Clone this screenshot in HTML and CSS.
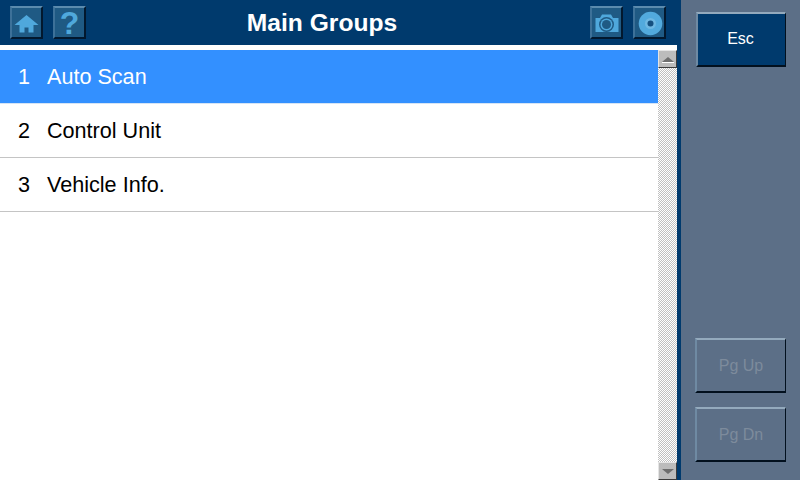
FILE: index.html
```html
<!DOCTYPE html>
<html lang="en">
<head>
    <meta charset="UTF-8" />
    <title>Main Groups</title>
    <link rel="stylesheet" href="styles.css">
</head>
<body>
<div class="screen">
    <div class="main">
        <div class="header">
            <div class="tool-btn">
                <svg width="28" height="24" viewBox="0 0 28 24"><path d="M13.500 4 L25.500 14 H20.500 V21.500 H15.500 V16.500 H11.500 V21.500 H6.500 V14 H1.500 Z" fill="#4fa8dc"/></svg>
            </div>
            <div class="tool-btn">
                <span class="help">?</span>
            </div>
            <h1>Main Groups</h1>
            <div class="tool-btn">
                <svg width="28" height="24" viewBox="0 0 28 24"><path d="M2.500 7 H7 L9 3.500 H18 L20 7 H25.500 V21 H2.500 Z" fill="#4fa8dc"/><circle cx="13.500" cy="13.500" r="7.500" fill="#1f5a84"/><circle cx="13.500" cy="13.500" r="6" fill="#4fa8dc"/><circle cx="13.500" cy="13.500" r="4.500" fill="#1f5a84"/></svg>
            </div>
            <div class="tool-btn">
                <svg width="28" height="28" viewBox="0 0 28 28"><circle cx="14.500" cy="14.500" r="11.800" fill="#52aadd"/><circle cx="14.500" cy="14.500" r="5.500" fill="#6fb8e2"/><circle cx="14.500" cy="14.500" r="3" fill="#15507f"/></svg>
            </div>
        </div>
        <div class="content">
            <ul class="list">
                <li class="row selected"><span class="num">1</span>Auto Scan</li>
                <li class="row"><span class="num">2</span>Control Unit</li>
                <li class="row"><span class="num">3</span>Vehicle Info.</li>
            </ul>
            <div class="scrollbar">
                <div class="arrow"><span class="tri-up"></span></div>
                <div class="track"></div>
                <div class="arrow"><span class="tri-down"></span></div>
            </div>
        </div>
    </div>
    <div class="side">
        <div class="side-btn primary">Esc</div>
        <div class="side-bottom">
            <div class="side-btn disabled">Pg Up</div>
            <div class="side-btn disabled">Pg Dn</div>
        </div>
    </div>
</div>
</body>
</html>
```
FILE: styles.css
```css
* {
    box-sizing: border-box;
    margin: 0;
    padding: 0;
}
body {
    width: 800px;
    height: 480px;
    overflow: hidden;
    font-family: 'Liberation Sans', Arial, sans-serif;
}
.screen {
    display: flex;
    width: 800px;
    height: 480px;
    background: #5c6f87;
}
.main {
    width: 681px;
    height: 480px;
    display: flex;
    flex-direction: column;
    background: #003a6d;
    padding-right: 4px;
}
.header {
    display: flex;
    align-items: flex-start;
    gap: 10px;
    height: 45px;
    margin-right: -4px;
    padding: 6px 15px 0 10px;
    background: #003a6d;
}
.header h1 {
    flex: 1;
    padding-right: 32px;
    color: #fff;
    font-size: 24.600px;
    line-height: 33px;
    text-align: center;
    font-weight: bold;
}
.tool-btn {
    width: 33px;
    height: 33px;
    display: flex;
    align-items: center;
    justify-content: center;
    background: #1f5a84;
    border-style: solid;
    border-width: 2px;
    border-color: #5b8bae #02182e #02182e #3d7199;
}
.help {
    color: #4fa8dc;
    font-size: 32px;
    font-weight: bold;
    line-height: 28px;
}
.content {
    flex: 1;
    display: flex;
    min-height: 0;
    background: #fff;
    border-top: 5px solid #fff;
}
.list {
    flex: 1;
    list-style: none;
}
.row {
    display: flex;
    align-items: center;
    height: 54px;
    padding-left: 18px;
    font-size: 21.600px;
    color: #000;
    border-bottom: 1px solid #c4c4c4;
}
.row.selected {
    color: #fff;
    background: #3390ff;
    border-bottom-color: #d5e4f5;
}
.num {
    width: 29px;
}
.scrollbar {
    width: 19px;
    display: flex;
    flex-direction: column;
}
.arrow {
    height: 18px;
    display: flex;
    flex-direction: column;
    align-items: center;
    justify-content: center;
    background: #bcbcbc;
    border-style: solid;
    border-width: 1px;
    border-color: #e4e4e4 #3c3c3c #3c3c3c #e4e4e4;
}
.tri-up, .tri-down {
    width: 0;
    height: 0;
    border-left: 6px solid transparent;
    border-right: 6px solid transparent;
}
.tri-up {
    border-bottom: 5px solid #6e6e6e;
    box-shadow: 0 1px 0 #fff;
}
.tri-down {
    border-top: 5px solid #6e6e6e;
}
.track {
    flex: 1;
    background-color: #fff;
    background-image: conic-gradient(#c0c0c0 25%, #fff 0 50%, #c0c0c0 0 75%, #fff 0);
    background-size: 2px 2px;
}
.side {
    flex: 1;
    display: flex;
    flex-direction: column;
    justify-content: space-between;
    padding: 12px 14px 18px 14px;
}
.side-bottom {
    display: flex;
    flex-direction: column;
    gap: 14px;
}
.side-btn {
    height: 55px;
    display: flex;
    align-items: center;
    justify-content: center;
    font-size: 16px;
    border-style: solid;
    border-width: 2px 1px 2px 2px;
    border-color: #94aabd #02101e #02101e #6f8aa3;
}
.side-btn.primary {
    padding: 0 2px 2px 0;
    color: #fff;
    background: #003a6d;
    margin-left: 1px;
}
.side-btn.disabled {
    color: #7d8b9c;
    background: #5c6f87;
}
```
